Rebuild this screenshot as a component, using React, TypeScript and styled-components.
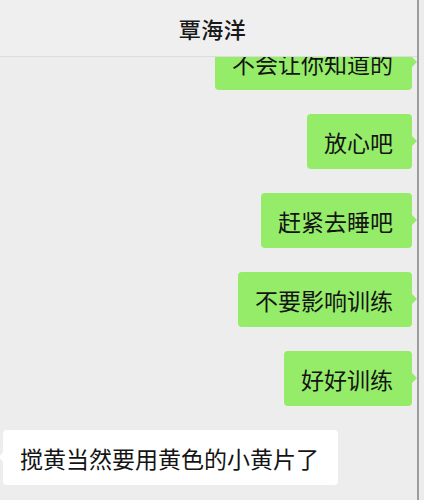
import { FC } from 'react';
import styled, { createGlobalStyle } from 'styled-components';

const GlobalStyle = createGlobalStyle`
  html, body {
    margin: 0;
    padding: 0;
    background: #ececec;
  }
  body {
    font-family: 'Noto Sans CJK SC', 'Noto Sans', sans-serif;
  }
`;

const Screen = styled.div`
  width: 417px;
  height: 500px;
  border-right: 2px solid #9c9c9c;
  background: #ededed;
  display: flex;
  flex-direction: column;
  overflow: hidden;
`;

const Header = styled.div`
  position: relative;
  z-index: 2;
  height: 56px;
  flex-shrink: 0;
  border-bottom: 1px solid #dcdcdc;
  background: #efefef;
  display: flex;
  align-items: center;
  justify-content: center;
  padding-left: 8px;
  font-size: 22px;
  font-weight: 500;
  color: #191919;
  letter-spacing: 0.5px;
`;

const MessageList = styled.div`
  flex: 1;
  display: flex;
  flex-direction: column;
  gap: 24px;
  padding: 0 5px 0 3px;
  overflow: hidden;
  & > :first-child {
    margin-top: -22px;
  }
`;

const Row = styled.div<{ $self?: boolean }>`
  display: flex;
  justify-content: ${(p) => (p.$self ? 'flex-end' : 'flex-start')};
`;

const Bubble = styled.div<{ $self?: boolean }>`
  position: relative;
  height: 55px;
  box-sizing: border-box;
  padding: 0 19px 0 17px;
  display: flex;
  align-items: center;
  border-radius: 4px;
  font-size: 23px;
  color: #141414;
  background: ${(p) => (p.$self ? '#95ec69' : '#ffffff')};
  &::after {
    content: '';
    position: absolute;
    top: 22px;
    ${(p) => (p.$self ? 'right: -5px;' : 'left: -4px;')}
    border-top: 5px solid transparent;
    border-bottom: 5px solid transparent;
    ${(p) =>
      p.$self ? 'border-left: 5px solid #95ec69;' : 'border-right: 4px solid #ffffff;'}
  }
`;

const messages = [
  { text: '不会让你知道的', self: true },
  { text: '放心吧', self: true },
  { text: '赶紧去睡吧', self: true },
  { text: '不要影响训练', self: true },
  { text: '好好训练', self: true },
  { text: '搅黄当然要用黄色的小黄片了', self: false }
];

const App: FC = () => {
  return (
    <>
      <GlobalStyle />
      <Screen>
        <Header>覃海洋</Header>
        <MessageList>
          {messages.map((m, i) => (
            <Row key={i} $self={m.self}>
              <Bubble $self={m.self}>{m.text}</Bubble>
            </Row>
          ))}
        </MessageList>
      </Screen>
    </>
  );
};

export default App;
